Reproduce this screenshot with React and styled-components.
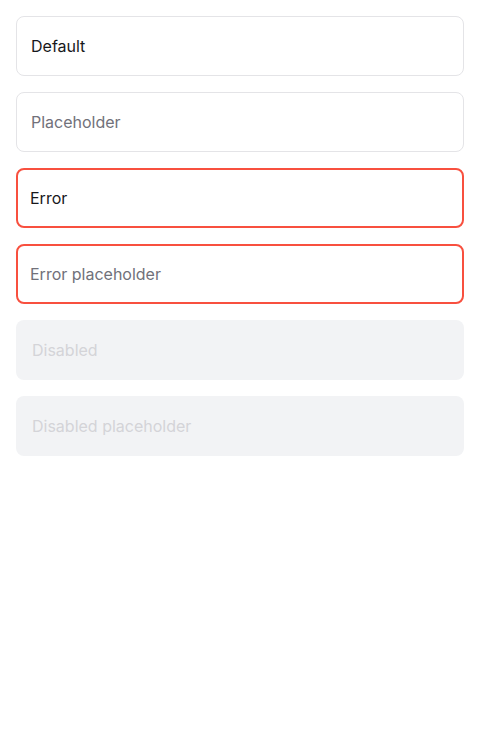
import React from 'react'
import styled, { createGlobalStyle, css } from 'styled-components'

const GlobalStyle = createGlobalStyle`
  body {
    margin: 0;
    background: #fff;
    font-family: Inter, "Noto Sans", sans-serif;
  }
`

const Stack = styled.div`
  display: flex;
  flex-direction: column;
  gap: 16px;
  padding: 16px;
`

const Field = styled.input`
  box-sizing: border-box;
  width: 100%;
  height: 60px;
  margin: 0;
  padding: 0 14px;
  border: 1px solid #e4e4e7;
  border-radius: 8px;
  background: #fff;
  color: #18181b;
  font-family: Inter, "Noto Sans", sans-serif;
  font-size: 16px;
  outline: none;

  &::placeholder {
    color: #71717a;
  }

  ${(p) =>
    p.$error &&
    css`
      border: 2px solid #f8503f;
      padding: 0 12px;
    `}

  &:disabled {
    border: none;
    padding: 0 16px;
    background: #f2f3f5;
    color: #d4d4d8;
  }

  &:disabled::placeholder {
    color: #d4d4d8;
  }
`

const App = () => (
  <>
    <GlobalStyle />
    <Stack>
      <Field defaultValue="Default" />
      <Field placeholder="Placeholder" />
      <Field $error defaultValue="Error" />
      <Field $error placeholder="Error placeholder" />
      <Field disabled defaultValue="Disabled" />
      <Field disabled placeholder="Disabled placeholder" />
    </Stack>
  </>
)

export default App
